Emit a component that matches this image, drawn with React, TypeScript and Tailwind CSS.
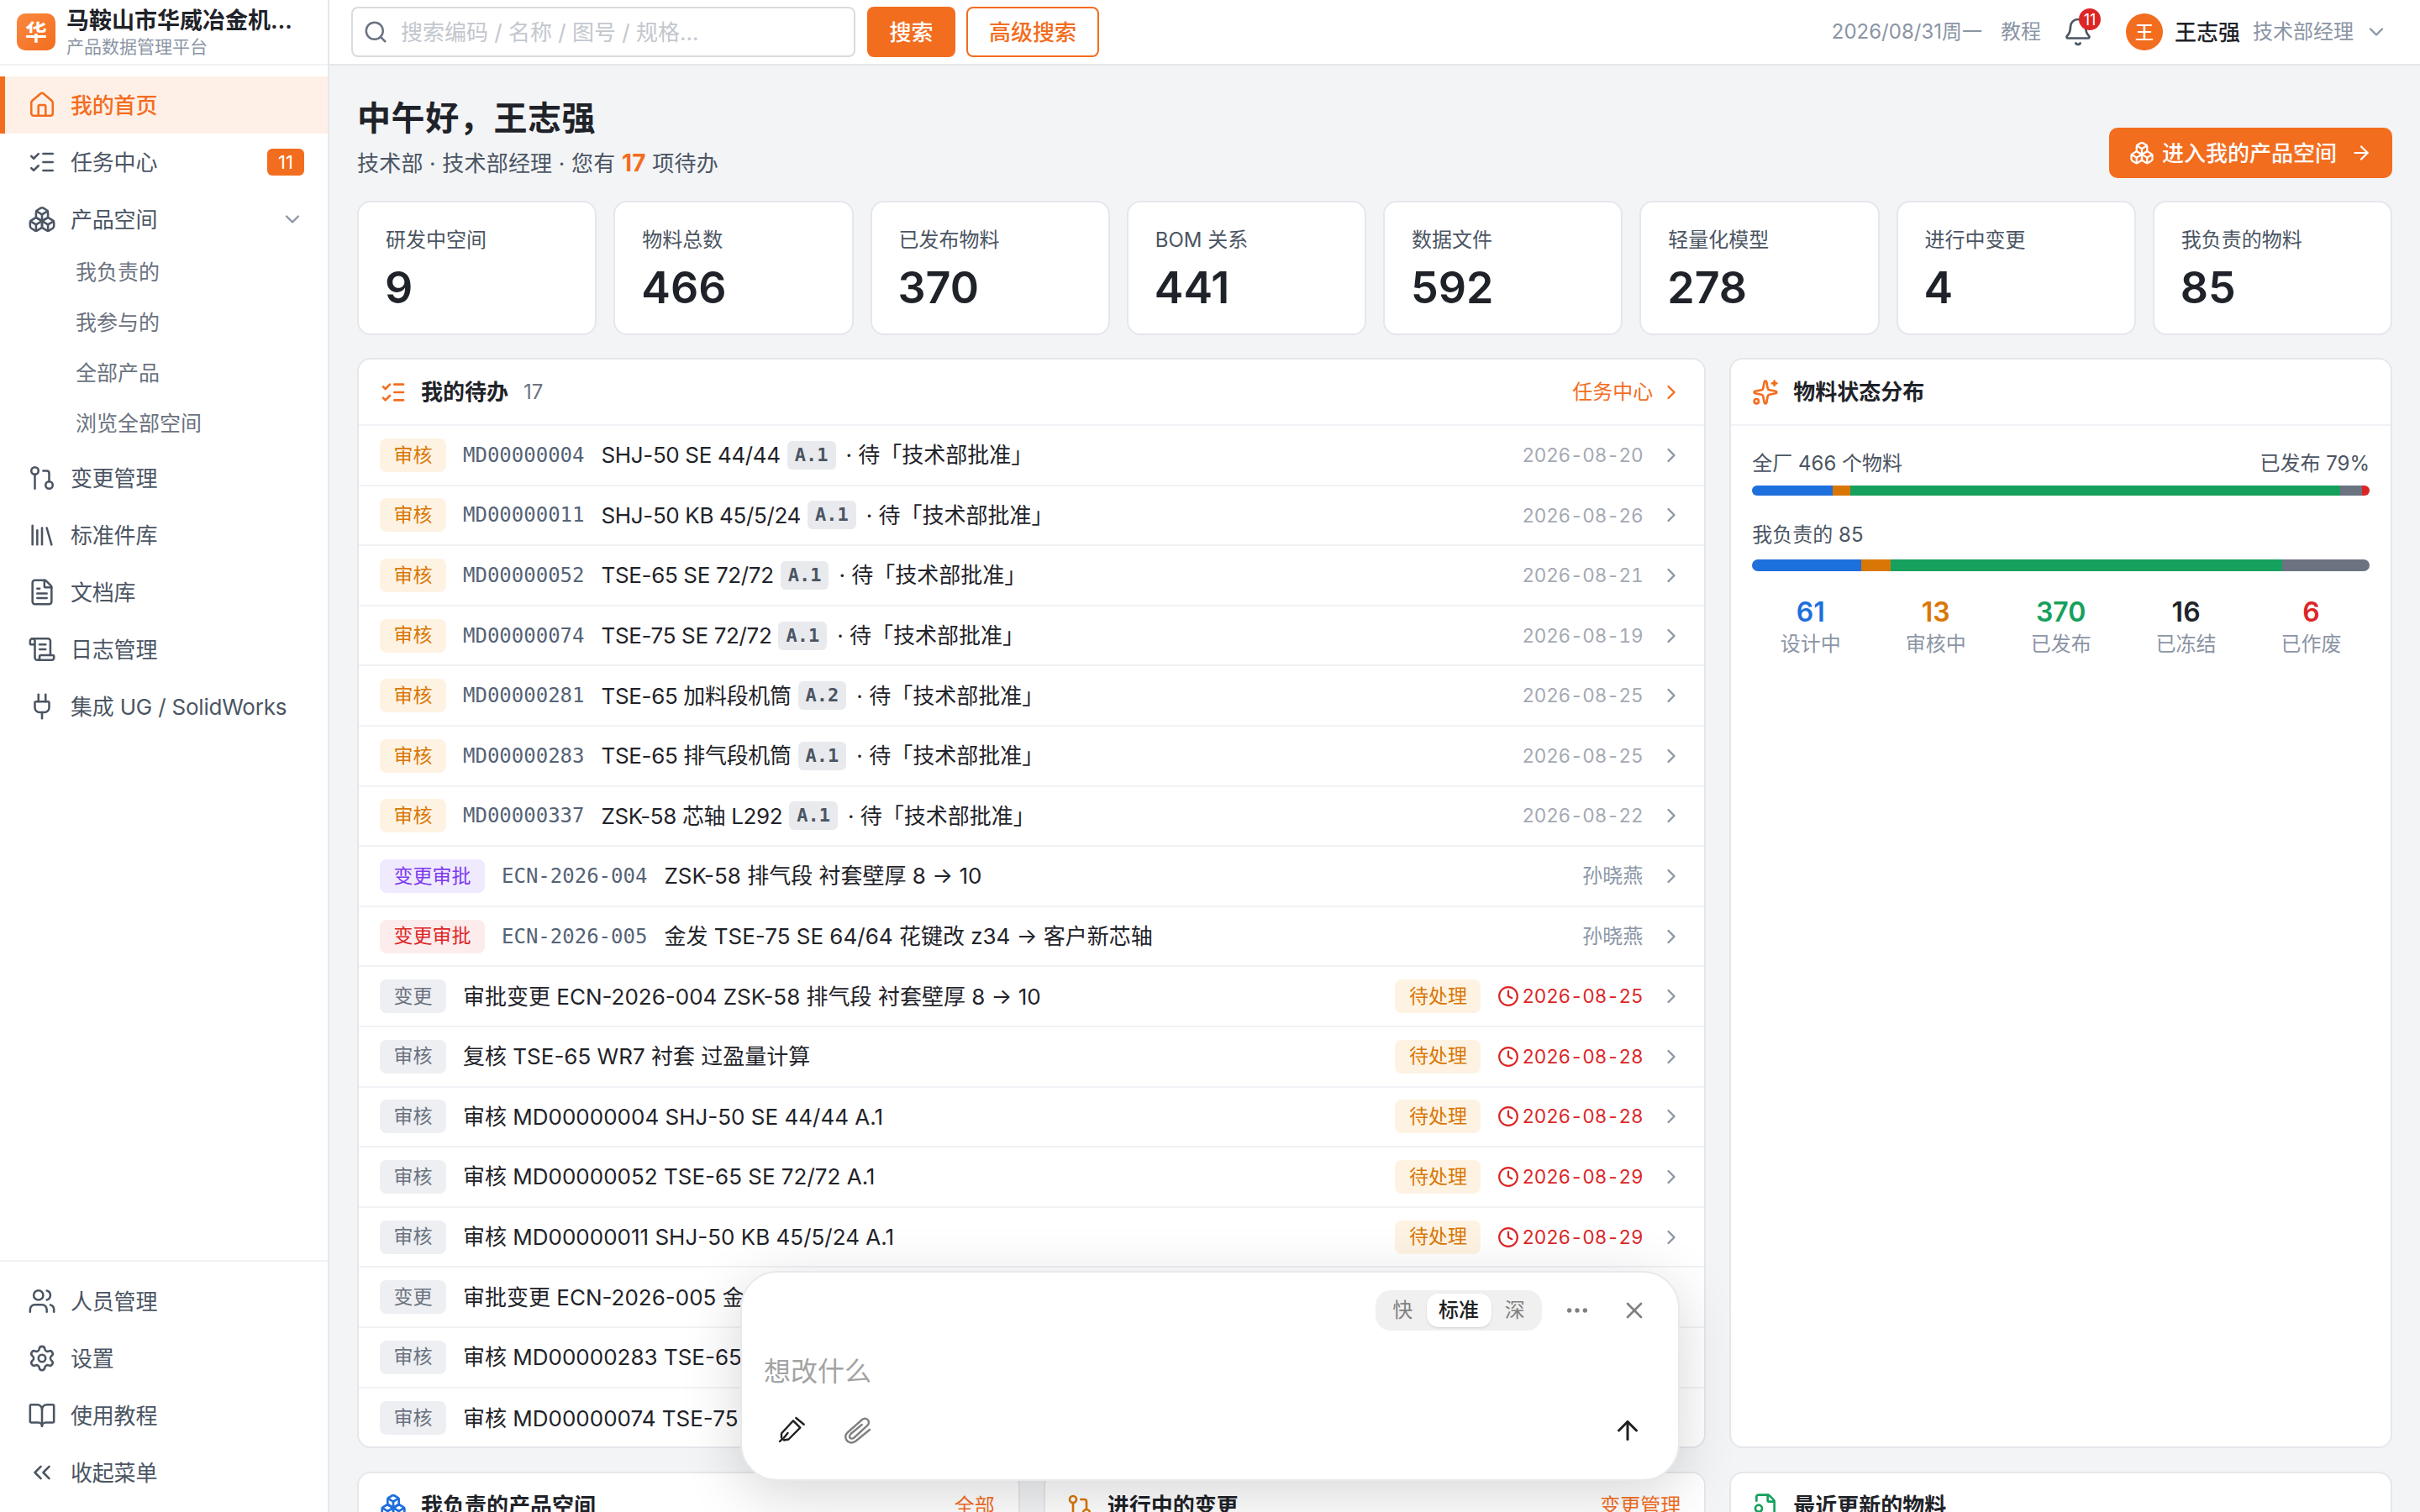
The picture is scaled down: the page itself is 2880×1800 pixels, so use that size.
import {
  House, ListChecks, Boxes, ChevronDown, ChevronRight, GitPullRequest, Library, FileText, ScrollText, Plug,
  Users, Settings, BookOpen, ChevronsLeft, Search, Bell, ArrowRight, Sparkles, Clock, FileBadge,
  ArrowUp, X, Ellipsis
} from 'lucide-react';

const font = 'font-["Inter","Noto_Sans_CJK_SC",sans-serif]';
const mono = 'font-["DejaVu_Sans_Mono","Noto_Sans_CJK_SC",monospace]';

const topNav = [
  { label: '我的首页', icon: House, active: true },
  { label: '任务中心', icon: ListChecks, badge: '11' },
  { label: '产品空间', icon: Boxes, open: true },
];
const subNav = ['我负责的', '我参与的', '全部产品', '浏览全部空间'];
const midNav = [
  { label: '变更管理', icon: GitPullRequest },
  { label: '标准件库', icon: Library },
  { label: '文档库', icon: FileText },
  { label: '日志管理', icon: ScrollText },
  { label: '集成 UG / SolidWorks', icon: Plug },
];
const bottomNav = [
  { label: '人员管理', icon: Users },
  { label: '设置', icon: Settings },
  { label: '使用教程', icon: BookOpen },
  { label: '收起菜单', icon: ChevronsLeft },
];

const stats = [
  ['研发中空间', '9'], ['物料总数', '466'], ['已发布物料', '370'], ['BOM 关系', '441'],
  ['数据文件', '592'], ['轻量化模型', '278'], ['进行中变更', '4'], ['我负责的物料', '85'],
];

const reviews = [
  ['MD00000004', 'SHJ-50 SE 44/44', 'A.1', '2026-08-20'],
  ['MD00000011', 'SHJ-50 KB 45/5/24', 'A.1', '2026-08-26'],
  ['MD00000052', 'TSE-65 SE 72/72', 'A.1', '2026-08-21'],
  ['MD00000074', 'TSE-75 SE 72/72', 'A.1', '2026-08-19'],
  ['MD00000281', 'TSE-65 加料段机筒', 'A.2', '2026-08-25'],
  ['MD00000283', 'TSE-65 排气段机筒', 'A.1', '2026-08-25'],
  ['MD00000337', 'ZSK-58 芯轴 L292', 'A.1', '2026-08-22'],
];

const ecns = [
  { code: 'ECN-2026-004', title: 'ZSK-58 排气段 衬套壁厚 8 → 10', cls: 'bg-[#f0eaff] text-[#7c3aed]' },
  { code: 'ECN-2026-005', title: '金发 TSE-75 SE 64/64 花键改 z34 → 客户新芯轴', cls: 'bg-[#fdecec] text-[#dc2626]' },
];

const tasks = [
  ['变更', '审批变更 ECN-2026-004 ZSK-58 排气段 衬套壁厚 8 → 10', '2026-08-25'],
  ['审核', '复核 TSE-65 WR7 衬套 过盈量计算', '2026-08-28'],
  ['审核', '审核 MD00000004 SHJ-50 SE 44/44 A.1', '2026-08-28'],
  ['审核', '审核 MD00000052 TSE-65 SE 72/72 A.1', '2026-08-29'],
  ['审核', '审核 MD00000011 SHJ-50 KB 45/5/24 A.1', '2026-08-29'],
  ['变更', '审批变更 ECN-2026-005 金发 TSE-75 SE 64/64 花键改 z34 → 客户新芯轴', '2026-08-30'],
  ['审核', '审核 MD00000283 TSE-65 排气段机筒 A.1', '2026-08-30'],
  ['审核', '审核 MD00000074 TSE-75 SE 72/72 A.1', '2026-08-31'],
];

const distribution = [
  { label: '设计中', value: 61, mine: 15, bar: 'bg-[#1d6fdc]', text: 'text-[#1d6fdc]' },
  { label: '审核中', value: 13, mine: 4, bar: 'bg-[#d97706]', text: 'text-[#d97706]' },
  { label: '已发布', value: 370, mine: 54, bar: 'bg-[#16a05d]', text: 'text-[#16a05d]' },
  { label: '已冻结', value: 16, mine: 12, bar: 'bg-[#6b7280]', text: 'text-[#1f2329]' },
  { label: '已作废', value: 6, mine: 0, bar: 'bg-[#dc2626]', text: 'text-[#dc2626]' },
];

function Row({ children }: { children: React.ReactNode }) {
  return (
    <div className="flex h-[71.6px] items-center gap-5 border-b-2 border-[#f1f2f5] pl-[25px] pr-[25px] last:border-b-0">
      {children}
      <ChevronRight size={28} strokeWidth={2} className="shrink-0 text-[#8b95a5]" />
    </div>
  );
}

function Tag({ className, children }: { className: string; children: React.ReactNode }) {
  return (
    <span className={`flex h-10 shrink-0 items-center rounded-lg px-[16.5px] text-[23px] ${className}`}>{children}</span>
  );
}

function Progress({ values, total, height }: { values: number[]; total: number; height: string }) {
  return (
    <div className={`flex overflow-hidden rounded-full ${height}`}>
      {distribution.map((d, i) => (
        <div key={d.label} className={d.bar} style={{ width: `${(values[i] / total) * 100}%` }} />
      ))}
    </div>
  );
}

function NavItem({ item }: { item: { label: string; icon: typeof House; active?: boolean; badge?: string; open?: boolean } }) {
  const Icon = item.icon;
  return (
    <div className={`flex h-[68px] items-center pr-7 text-[26px] ${
      item.active ? 'border-l-[6px] border-[#f36d1f] bg-[#fef0e7] pl-[27px] font-medium text-[#f36d1f]' : 'pl-[33px] text-[#4b5563]'
    }`}>
      <Icon size={34} strokeWidth={1.8} className="shrink-0" />
      <span className="ml-[17px] tracking-[-0.2px] whitespace-nowrap">{item.label}</span>
      {item.badge && (
        <span className="ml-auto flex h-8 w-11 items-center justify-center rounded-md bg-[#f36d1f] text-[22px] text-white">{item.badge}</span>
      )}
      {item.open && <ChevronDown size={28} strokeWidth={2} className="ml-auto text-[#8b95a5]" />}
    </div>
  );
}

function CardHeader({ icon, title, count, link, arrow }: { icon: React.ReactNode; title: string; count?: string; link?: string; arrow?: boolean }) {
  return (
    <div className={`flex h-[79px] shrink-0 items-center border-b-2 border-[#f1f2f5] pl-[25px] ${arrow ? 'pr-[25px]' : 'pr-7'}`}>
      {icon}
      <span className="ml-[17px] text-[26px] font-semibold text-[#1f2329]">{title}</span>
      {count && <span className="ml-[18px] text-[24px] text-[#6b7280]">{count}</span>}
      {link && (
        <span className="ml-auto flex items-center gap-2 text-[24px] text-[#f36d1f]">
          {link}
          {arrow && <ChevronRight size={28} strokeWidth={2} />}
        </span>
      )}
    </div>
  );
}

function PenIcon() {
  return (
    <svg width="34" height="34" viewBox="0 0 34 34" fill="none" stroke="#1f1f1f" strokeWidth="2.4" strokeLinejoin="round" strokeLinecap="round" className="ml-4 shrink-0">
      <path d="M19 5.3 27.3 13.7 13.5 27.5 8 28.5 5 25.5 5 20.5Z" />
      <path d="M3 30 5.5 27.5" />
      <path d="M22.3 2 31.7 9.7" />
      <path d="M8 25.5 12.5 20" />
    </svg>
  );
}

function ClipIcon() {
  return (
    <svg width="34" height="34" viewBox="0 0 34 34" fill="none" stroke="#808080" strokeWidth="2.4" strokeLinecap="round" className="ml-[45px] shrink-0">
      <path d="M31 16 14.5 29.5C10 33 5 31.5 3 27.5 1.5 24 2.5 21 5 19L22 4C25 1.5 28.5 3 29.5 5.5 30.5 8 29.5 10 28 11.2L12.5 25.5C10.5 27 8.5 27 7.5 25.5 6.5 24 7 22.5 8.5 21L21.7 10" />
    </svg>
  );
}

export default function App() {
  return (
    <div className={`flex h-[1800px] w-[2880px] overflow-hidden bg-[#f3f4f6] text-[#1f2329] ${font}`}>
      {/* Sidebar */}
      <aside className="flex h-full w-[392px] shrink-0 flex-col border-r-2 border-[#e5e7eb] bg-white">
        <div className="flex h-[78px] shrink-0 items-center gap-[13px] border-b-2 border-[#f1f2f5] pl-5 pr-4">
          <div className="flex h-11 w-[46px] shrink-0 items-center justify-center rounded-[10px] bg-gradient-to-br from-[#f9883d] to-[#f36d1f] text-[26px] font-bold text-white">华</div>
          <div className="min-w-0">
            <div className="truncate text-[27px] leading-[36px] font-semibold text-[#1f2329]">马鞍山市华威冶金机械有限公司</div>
            <div className="text-[21px] leading-[26px] text-[#8b95a5]">产品数据管理平台</div>
          </div>
        </div>
        <nav className="pt-[13px]">
          {topNav.map(item => <NavItem key={item.label} item={item} />)}
          {subNav.map(label => (
            <div key={label} className="flex h-[60px] items-center pl-[90px] text-[25px] text-[#6b7280]">{label}</div>
          ))}
          {midNav.map(item => <NavItem key={item.label} item={item} />)}
        </nav>
        <div className="mt-auto border-t-2 border-[#f1f2f5] py-[13px]">
          {bottomNav.map(item => <NavItem key={item.label} item={item} />)}
        </div>
      </aside>

      <div className="relative flex min-w-0 flex-1 flex-col">
        {/* Top bar */}
        <header className="flex h-[78px] shrink-0 items-center border-b-2 border-[#e5e7eb] bg-white pl-[26px] pr-[38px]">
          <div className="flex h-[60px] w-[600px] items-center gap-[15px] rounded-lg border-2 border-[#d8dbe0] pl-3">
            <Search size={30} strokeWidth={2} className="text-[#6b7280]" />
            <span className="text-[26px] text-[#c3c7ce]">搜索编码 / 名称 / 图号 / 规格...</span>
          </div>
          <button className="ml-[14px] h-[60px] w-[105px] rounded-lg bg-[#f36d1f] text-[26px] font-medium text-white">搜索</button>
          <button className="ml-[13px] h-[60px] w-[158px] rounded-lg border-2 border-[#f36d1f] bg-white text-[26px] font-medium text-[#f36d1f]">高级搜索</button>
          <span className="ml-auto text-[24px] text-[#8b95a5]">2026/08/31周一</span>
          <span className="ml-[22px] text-[24px] text-[#8b95a5]">教程</span>
          <div className="relative ml-[28px] flex h-11 w-8 items-center justify-center">
            <Bell size={36} strokeWidth={1.8} className="shrink-0 text-[#4b5563]" />
            <span className="absolute top-[-6px] left-[17px] flex h-[26px] w-[26px] items-center justify-center rounded-full bg-[#dc2626] text-[18px] text-white">11</span>
          </div>
          <div className="ml-[41px] flex h-11 w-11 items-center justify-center rounded-full bg-[#f36d1f] text-[22px] font-medium text-white">王</div>
          <span className="ml-[14px] text-[26px] font-medium text-[#1f2329]">王志强</span>
          <span className="ml-[15px] text-[24px] text-[#8b95a5]">技术部经理</span>
          <ChevronDown size={28} strokeWidth={2} className="ml-[13px] text-[#8b95a5]" />
        </header>

        <main className="flex min-h-0 flex-1 flex-col overflow-hidden pl-[33px] pr-[33px]">
          {/* Greeting */}
          <div className="flex h-[161px] shrink-0 items-start justify-between pt-[38px]">
            <div>
              <h1 className="text-[40px] leading-[50px] font-semibold tracking-[0.6px] text-[#1f2329]">中午好，王志强</h1>
              <p className="mt-[11px] text-[26px] leading-[34px] tracking-[0.2px] text-[#4b5563]">
                技术部 · 技术部经理 · 您有 <span className="text-[28px] font-bold text-[#f36d1f]">17</span> 项待办
              </p>
            </div>
            <button className="mt-[36px] flex h-[60px] w-[337px] items-center rounded-[10px] bg-[#f36d1f] pl-6 text-[26px] font-medium text-white">
              <Boxes size={30} strokeWidth={1.8} className="mr-[9px]" />
              进入我的产品空间
              <ArrowRight size={26} strokeWidth={2} className="ml-4" />
            </button>
          </div>

          {/* Stats */}
          <div className="grid shrink-0 grid-cols-8 gap-5">
            {stats.map(([label, value]) => (
              <div key={label} className="h-[160px] rounded-2xl border-2 border-[#e5e7eb] bg-white pt-[29px] pl-8">
                <div className="text-[24px] leading-8 text-[#4b5563]">{label}</div>
                <div className="mt-[11px] -ml-px text-[52px] leading-[60px] font-semibold text-[#1f2329]">{value}</div>
              </div>
            ))}
          </div>

          <div className="mt-[27px] grid shrink-0 grid-cols-3 gap-[28px]">
            {/* Todo list */}
            <section className="col-span-2 h-[1298px] overflow-hidden rounded-2xl border-2 border-[#e5e7eb] bg-white">
              <CardHeader
                icon={<ListChecks size={32} strokeWidth={2} className="text-[#f36d1f]" />}
                title="我的待办"
                count="17"
                link="任务中心"
                arrow
              />
              {reviews.map(([id, name, rev, date]) => (
                <Row key={id}>
                  <Tag className="bg-[#fef3e2] text-[#d97706]">审核</Tag>
                  <span className={`shrink-0 text-[24px] text-[#556376] ${mono}`}>{id}</span>
                  <span className="flex min-w-0 flex-1 items-center text-[26px] text-[#1f2329]">
                    <span className="tracking-[-0.35px]">{name}</span>
                    <code className={`mr-3 ml-2 rounded-md bg-[#e9eaed] px-[9px] text-[22px] leading-[34px] font-bold text-[#4b5563] ${mono}`}>{rev}</code>
                    · 待「技术部批准」
                  </span>
                  <span className="text-[22.5px] tracking-[-0.2px] text-[#a3a9b3] tabular-nums">{date}</span>
                </Row>
              ))}
              {ecns.map(e => (
                <Row key={e.code}>
                  <Tag className={e.cls}>变更审批</Tag>
                  <span className={`shrink-0 text-[24px] text-[#556376] ${mono}`}>{e.code}</span>
                  <span className="min-w-0 flex-1 text-[26px] text-[#1f2329]">{e.title}</span>
                  <span className="text-[24px] text-[#8b95a5]">孙晓燕</span>
                </Row>
              ))}
              {tasks.map(([kind, title, date]) => (
                <Row key={title}>
                  <Tag className="bg-[#eeeff2] text-[#6b7280]">{kind}</Tag>
                  <span className="min-w-0 flex-1 truncate text-[26px] text-[#1f2329]">{title}</span>
                  <Tag className="bg-[#fef3e2] text-[#d97706]">待处理</Tag>
                  <span className="flex items-center gap-[3px] text-[22.5px] tracking-[-0.2px] text-[#dc2626] tabular-nums">
                    <Clock size={26} strokeWidth={2} />
                    {date}
                  </span>
                </Row>
              ))}
            </section>

            {/* Status distribution */}
            <section className="rounded-2xl border-2 border-[#e5e7eb] bg-white">
              <CardHeader icon={<Sparkles size={32} strokeWidth={2} className="text-[#f36d1f]" />} title="物料状态分布" />
              <div className="px-[25px] pt-[29px]">
                <div className="flex justify-between text-[24px] leading-[32px] text-[#4b5563]">
                  <span>全厂 466 个物料</span>
                  <span>已发布 79%</span>
                </div>
                <div className="mt-[10px]"><Progress values={distribution.map(d => d.value)} total={466} height="h-3" /></div>
                <div className="mt-[31px] text-[24px] leading-[32px] text-[#4b5563]">我负责的 85</div>
                <div className="mt-[13px]"><Progress values={distribution.map(d => d.mine)} total={85} height="h-[14px]" /></div>
                <div className="mt-[28px] grid grid-cols-5 gap-[10px] text-center">
                  {distribution.map(d => (
                    <div key={d.label}>
                      <div className={`text-[32px] leading-[42px] font-semibold ${d.text}`}>{d.value}</div>
                      <div className="mt-[1px] text-[24px] leading-[32px] text-[#8b95a5]">{d.label}</div>
                    </div>
                  ))}
                </div>
              </div>
            </section>

            {/* Lower row, cut by the window */}
            <section className="h-[120px] rounded-2xl border-2 border-[#e5e7eb] bg-white">
              <CardHeader icon={<Boxes size={32} strokeWidth={2} className="text-[#1d6fdc]" />} title="我负责的产品空间" link="全部" />
            </section>
            <section className="h-[120px] rounded-2xl border-2 border-[#e5e7eb] bg-white">
              <CardHeader icon={<GitPullRequest size={32} strokeWidth={2} className="text-[#d97706]" />} title="进行中的变更" link="变更管理" />
            </section>
            <section className="h-[120px] rounded-2xl border-2 border-[#e5e7eb] bg-white">
              <CardHeader icon={<FileBadge size={32} strokeWidth={2} className="text-[#16a05d]" />} title="最近更新的物料" />
            </section>
          </div>
        </main>

        {/* Floating composer */}
        <div className="absolute top-[1513px] left-[489px] flex h-[250px] w-[1118px] flex-col rounded-[44px] border-2 border-[#e8e9ec] bg-white pl-[26px] pr-[28px] shadow-[0_16px_70px_rgba(0,0,0,0.16)]">
          <div className="flex h-[69px] shrink-0 items-end justify-end">
            <div className="flex h-12 w-[198px] items-center rounded-[18px] bg-[#f0f0f0] px-1 text-[24px] text-[#808080]">
              <span className="flex-1 text-center">快</span>
              <span className="flex h-10 w-[77px] items-center justify-center rounded-[14px] bg-white font-medium text-[#1f1f1f] shadow-sm">标准</span>
              <span className="flex-1 text-center">深</span>
            </div>
            <div className="ml-[26px] flex h-12 w-8 items-center justify-center text-[#808080]"><Ellipsis size={32} strokeWidth={2} /></div>
            <div className="ml-9 mr-[8px] flex h-12 w-8 items-center justify-center text-[#808080]"><X size={32} strokeWidth={2} /></div>
          </div>
          <div className="pt-[27px] text-[32px] leading-[44px] text-[#a3a3a3]">想改什么</div>
          <div className="mt-[30px] flex h-9 items-center">
            <PenIcon />
            <ClipIcon />
            <ArrowUp size={36} strokeWidth={2} className="mr-[14px] ml-auto text-[#1f1f1f]" />
          </div>
        </div>
      </div>
    </div>
  );
}
